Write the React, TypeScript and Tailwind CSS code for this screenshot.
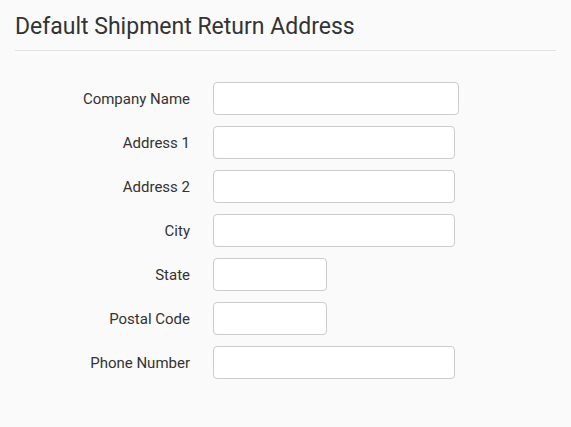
import React from "react";

const rows: { label: string; w: string }[] = [
  { label: "Company Name", w: "w-[246px]" },
  { label: "Address 1", w: "w-[242px]" },
  { label: "Address 2", w: "w-[242px]" },
  { label: "City", w: "w-[242px]" },
  { label: "State", w: "w-[114px]" },
  { label: "Postal Code", w: "w-[114px]" },
  { label: "Phone Number", w: "w-[242px]" },
];

export default function App() {
  return (
    <div
      className="w-[571px] h-[427px] bg-[#fafafa] px-[15px] text-[#333333]"
      style={{ fontFamily: "Roboto, 'Liberation Sans', sans-serif" }}
    >
      <h1 className="pt-[14px] pb-[10px] text-[23px] leading-[26px] font-normal border-b border-[#e3e3e3]">
        Default Shipment Return Address
      </h1>
      <form className="mt-[31px] flex flex-col gap-[11px]">
        {rows.map((r) => (
          <div key={r.label} className="flex items-center">
            <label className="w-[175px] text-right text-[15px] leading-[20px]">
              {r.label}
            </label>
            <input
              type="text"
              className={`ml-[23px] h-[33px] ${r.w} rounded-[4px] border border-[#cccccc] bg-white`}
            />
          </div>
        ))}
      </form>
    </div>
  );
}
